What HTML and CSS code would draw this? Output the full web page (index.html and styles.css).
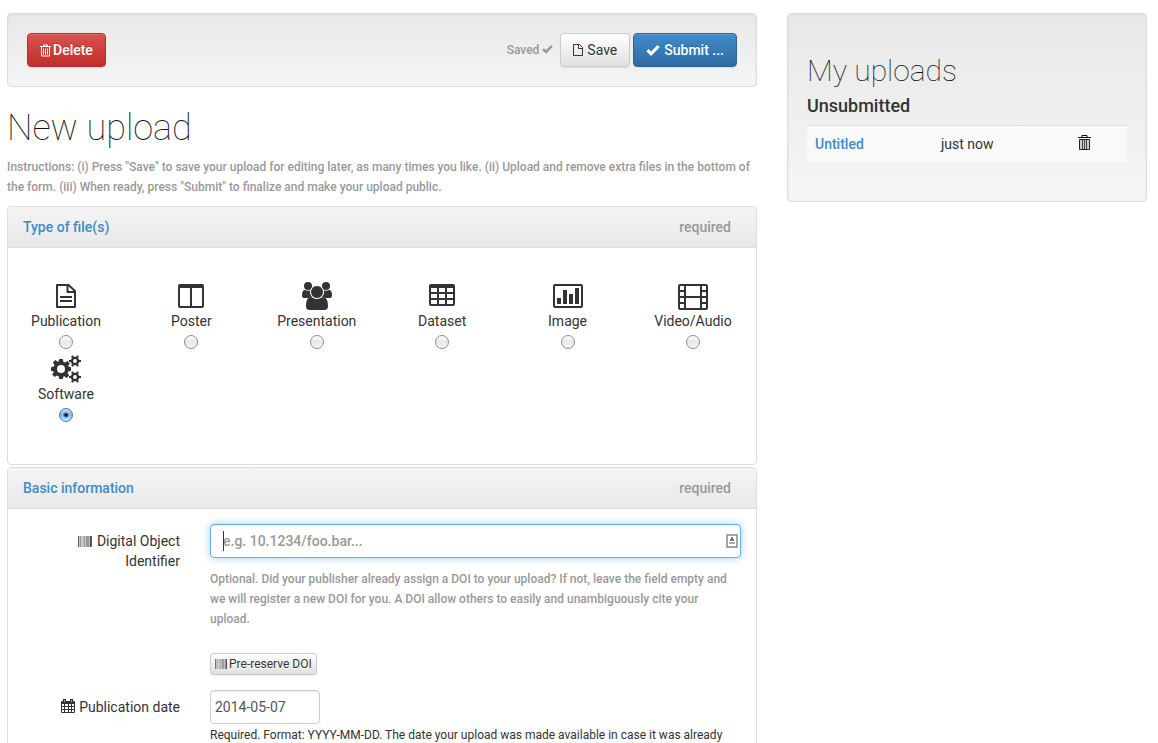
FILE: index.html
```html
<!DOCTYPE html>
<html lang="en">
<head>
<meta charset="utf-8">
<title>New upload</title>
<link rel="stylesheet" href="styles.css">
</head>
<body>
<svg class="defs" aria-hidden="true">
  <defs>
    <symbol id="barcode" viewBox="0 0 14 12" preserveAspectRatio="none">
      <path fill="#555" d="M0 0h1v12H0zM12 0h2v12h-2z"/>
      <path fill="#ccc" d="M1 0h1v12H1zM3 0h2v12H3zM7 0h1v12H7z"/>
      <path fill="#999" d="M2 0h1v12H2zM6 0h1v12H6zM8 0h3v12H8z"/>
      <path fill="#bbb" d="M5 0h1v12H5zM11 0h1v12h-1z"/>
    </symbol>
    <symbol id="check" viewBox="0 0 12 10">
      <path d="M1.2 5.2 4.3 8.2 10.8 1.6" fill="none" stroke="currentColor" stroke-width="2.7"/>
    </symbol>
    <symbol id="gear" viewBox="-10 -10 20 20">
      <path fill="currentColor" fill-rule="evenodd" d="M-1.8-10h3.6l.6 2.7 1.7.7L6.5-8 8.9-5.6 7.2-3.2 7.4-2.5 10-1.8V1.8L7.3 2.4 6.6 4.1 8.1 6.4 5.6 8.9 3.3 7.3 2.4 7.5 1.8 10H-1.8L-2.4 7.3-4.1 6.6-6.4 8.1-8.9 5.6-7.3 3.3-7.5 2.4-10 1.8V-1.8L-7.3-2.4-6.6-4.1-8.1-6.4-5.6-8.9-3.3-7.3-2.4-7.5zM0-4A4 4 0 1 0 0 4 4 4 0 1 0 0-4z"/>
    </symbol>
    <symbol id="cog" viewBox="-6.2 -6.2 12.4 12.4">
      <circle r="3.2" fill="none" stroke="currentColor" stroke-width="2.4"/>
      <path stroke="currentColor" stroke-width="2.2" d="M-4 0h-2.2M4 0h2.2M-2-3.5l-1.1-1.9M2-3.5l1.1-1.9M-2 3.5l-1.1 1.9M2 3.5l1.1 1.9"/>
    </symbol>
  </defs>
</svg>

<div class="page">
  <main>
    <div class="well toolbar">
      <button class="btn btn-danger" type="button">
        <svg width="11" height="13" viewBox="0 0 11 13" aria-hidden="true"><path d="M0 2.5h11M3.5 2.5V1h4v1.5M1.5 2.5V12h8V2.5M3.5 4.5v6M5.5 4.5v6M7.5 4.5v6" fill="none" stroke="currentColor"/></svg>
        Delete
      </button>
      <span class="status">Saved <svg width="11" height="10" aria-hidden="true"><use href="#check"/></svg></span>
      <div class="actions">
        <button class="btn btn-default" type="button">
          <svg width="10" height="12" viewBox="0 0 10 12" aria-hidden="true"><path d="M.5.5h6l3 3v8h-9zM5.5.5v4h4" fill="none" stroke="currentColor"/></svg>
          Save
        </button>
        <button class="btn btn-primary" type="button">
          <svg width="14" height="12" aria-hidden="true"><use href="#check"/></svg>
          Submit ...
        </button>
      </div>
    </div>

    <h1>New upload</h1>
    <p class="intro">Instructions: (i) Press "Save" to save your upload for editing later, as many times you like. (ii) Upload and remove extra files in the bottom of the form. (iii) When ready, press "Submit" to finalize and make your upload public.</p>

    <section class="panel">
      <header class="panel-heading"><a href="#types">Type of file(s)</a><span>required</span></header>
      <div class="types" id="types">
        <label class="type">
          <svg viewBox="0 0 30 28" aria-hidden="true"><path d="M6 3h11.5L24 9v16H6zM16.5 3v7H24" fill="none" stroke="currentColor" stroke-width="2" stroke-linejoin="round"/><path d="M9 15h12M9 19h12" stroke="currentColor" stroke-width="2"/></svg>
          Publication
          <input type="radio" name="type">
        </label>
        <label class="type">
          <svg viewBox="0 0 30 28" aria-hidden="true"><rect x="3" y="3" width="24" height="22" rx="1" fill="none" stroke="currentColor" stroke-width="2"/><path d="M3 2h24v4H3zM14 5h2v20h-2z" fill="currentColor"/></svg>
          Poster
          <input type="radio" name="type">
        </label>
        <label class="type">
          <svg viewBox="0 0 30 28" aria-hidden="true"><g fill="currentColor"><circle cx="6" cy="4" r="4"/><circle cx="24" cy="4" r="4"/><path d="M0 13c0-3 1-5 3-5 2 1 4 1 6 0L8 11l2 4-4 1H2c-1.5 0-2-1-2-3zM30 13c0-3-1-5-3-5-2 1-4 1-6 0l1 3-2 4 4 1h4c1.5 0 2-1 2-3z"/><path d="M4 24c0-6 2-9 5-9 4 2 8 2 12 0 3 0 5 3 5 9 0 3-1.500 4-4 4H8c-2.500 0-4-1-4-4z"/><circle cx="15" cy="10" r="6.500" stroke="#fff"/></g></svg>
          Presentation
          <input type="radio" name="type">
        </label>
        <label class="type">
          <svg viewBox="0 0 30 28" aria-hidden="true"><path fill="currentColor" fill-rule="evenodd" d="M4 2h22a2 2 0 0 1 2 2v18a2 2 0 0 1-2 2H4a2 2 0 0 1-2-2V4a2 2 0 0 1 2-2zM4 6v4h6V6zM12 6v4h6V6zM20 6v4h6V6zM4 12v4h6v-4zM12 12v4h6v-4zM20 12v4h6v-4zM4 18v4h6v-4zM12 18v4h6v-4zM20 18v4h6v-4z"/></svg>
          Dataset
          <input type="radio" name="type">
        </label>
        <label class="type">
          <svg viewBox="0 0 30 28" aria-hidden="true"><rect x="1" y="3" width="28" height="22" rx="1" fill="none" stroke="currentColor" stroke-width="2"/><path d="M4 16h4v6H4zM10 8h4v14h-4zM16 12h4v10h-4zM22 6h4v16h-4z" fill="currentColor"/></svg>
          Image
          <input type="radio" name="type">
        </label>
        <label class="type">
          <svg viewBox="0 0 30 28" aria-hidden="true"><rect y="2" width="30" height="26" rx="2" fill="currentColor"/><path fill="#fff" d="M8 4h14v10H8zM8 16h14v10H8z"/><path stroke="#fff" stroke-width="4" stroke-dasharray="4 2" d="M4 4v22M26 4v22"/></svg>
          Video/Audio
          <input type="radio" name="type">
        </label>
        <label class="type">
          <svg viewBox="0 0 30 28" aria-hidden="true"><use href="#gear" x="0" y="4" width="20" height="20"/><use href="#cog" x="18" y="0" width="12" height="12"/><use href="#cog" x="18" y="16" width="12" height="12"/></svg>
          Software
          <input type="radio" name="type" checked>
        </label>
      </div>
    </section>

    <section class="panel">
      <header class="panel-heading"><a href="#basic">Basic information</a><span>required</span></header>
      <div class="fields" id="basic">
        <label class="field-label" for="doi"><svg width="14" height="11" aria-hidden="true"><use href="#barcode"/></svg> Digital Object Identifier</label>
        <div class="field">
          <div class="doi-box">
            <input class="control focused" id="doi" type="text" placeholder="e.g. 10.1234/foo.bar...">
            <i class="caret"></i>
            <svg class="autofill" width="12" height="14" viewBox="0 0 12 14" aria-hidden="true"><rect x="1" y="1" width="10" height="12" fill="#fff" stroke="#888" stroke-width="1.5"/><path d="M5 3h2v2h1v2H4V5h1z" fill="#777"/><path d="M3 8h6v2H3z" fill="#aaa"/></svg>
          </div>
          <p class="help">Optional. Did your publisher already assign a DOI to your upload? If not, leave the field empty and we will register a new DOI for you. A DOI allow others to easily and unambiguously cite your upload.</p>
          <button class="btn btn-default btn-small" type="button"><svg width="12" height="10" aria-hidden="true"><use href="#barcode"/></svg> Pre-reserve DOI</button>
        </div>
        <label class="field-label" for="date"><svg width="14" height="14" viewBox="0 0 14 14" aria-hidden="true"><path fill="#333" d="M1 2h12a1 1 0 0 1 1 1v10a1 1 0 0 1-1 1H1a1 1 0 0 1-1-1V3a1 1 0 0 1 1-1zM2 0h3v4H2zM9 0h3v4H9z"/><path fill="#fff" d="M1 5h2v2H1zM4 5h3v2H4zM8 5h2v2H8zM11 5h2v2h-2zM1 8h2v2H1zM4 8h3v2H4zM8 8h2v2H8zM11 8h2v2h-2zM1 11h2v2H1zM4 11h3v2H4zM8 11h2v2H8zM11 11h2v2h-2z"/><path d="M3.5 1v2M10.5 1v2" stroke="#aaa"/></svg> Publication date</label>
        <div class="field">
          <input class="control date" id="date" type="text" value="2014-05-07">
          <p class="note">Required. Format: YYYY-MM-DD. The date your upload was made available in case it was already</p>
        </div>
      </div>
    </section>
  </main>

  <aside class="well uploads">
    <h2>My uploads</h2>
    <h4>Unsubmitted</h4>
    <table>
      <tr>
        <td class="name"><a href="#untitled">Untitled</a></td>
        <td class="time">just now</td>
        <td><button class="trash" type="button" aria-label="Delete upload"><svg width="13" height="16" viewBox="0 0 13 16" aria-hidden="true"><path d="M0 2.5h13M4 2.5v-2h5v2" fill="none" stroke="#111"/><path d="M1.5 4.5h10v10h-10z" fill="#ccc" stroke="#222"/><path d="M4.5 5v9M6.5 5v9M8.5 5v9" stroke="#444"/></svg></button></td>
      </tr>
    </table>
  </aside>
</div>
</body>
</html>
```
FILE: styles.css
```css
* { box-sizing: border-box; }

body {
  margin: 0;
  background: #fff;
  color: #333;
  font: 14px/20px Roboto, "Liberation Sans", sans-serif;
}

a { color: #428bca; text-decoration: none; }
svg { overflow: visible; }
.defs { position: absolute; width: 0; height: 0; }

.page {
  display: grid;
  grid-template-columns: 25fr 12fr;
  gap: 30px;
  align-items: start;
  padding: 13px 11px 0 7px;
}

.well {
  padding: 19px;
  border: 1px solid #dcdcdc;
  border-radius: 4px;
  background: linear-gradient(#e8e8e8, #f5f5f5);
  box-shadow: inset 0 1px 3px rgba(0, 0, 0, 0.05);
}

.toolbar { display: flex; align-items: center; margin-bottom: 20px; }
.status { margin-left: auto; margin-right: 7px; color: #999; font-size: 12px; font-weight: 500; }
.actions { display: flex; gap: 3px; }

.btn {
  display: inline-flex;
  align-items: center;
  justify-content: center;
  gap: 3px;
  padding: 6px 12px;
  border: 1px solid #ccc;
  border-radius: 4px;
  font: 14px/20px Roboto, "Liberation Sans", sans-serif;
  box-shadow: inset 0 1px 0 rgba(255, 255, 255, 0.15), 0 1px 1px rgba(0, 0, 0, 0.08);
}
.btn-default { color: #333; background: linear-gradient(#fff, #e0e0e0); text-shadow: 0 1px 0 #fff; }
.btn-danger,
.btn-primary { color: #fff; font-weight: 500; text-shadow: 0 -1px 0 rgba(0, 0, 0, 0.2); }
.btn-danger { gap: 2px; border-color: #b92c28; background: linear-gradient(#d9534f, #c12e2a); }
.btn-primary { border-color: #2b669a; background: linear-gradient(#428bca, #2d6ca2); }
.actions .btn { gap: 4px; }
.btn-small { gap: 2px; padding: 1px 4px; border-radius: 3px; font-size: 12px; line-height: 18px; }

h1, h2, h4 { margin: 0; font-weight: 100; }
h1, h2 { color: #111; }
h1 { margin-bottom: 8px; font-size: 36px; line-height: 42px; }
h2 { margin: 20px 0 8px; font-size: 30px; line-height: 35px; }
h4 { margin-bottom: 10px; font-size: 18px; font-weight: 500; line-height: 19px; }

.intro { margin: 0 0 9px; color: #999; font-size: 12px; font-weight: 500; }

.panel { margin-bottom: 2px; border: 1px solid #ddd; border-radius: 4px; }
.panel-heading {
  display: flex;
  justify-content: space-between;
  padding: 10px 25px 10px 15px;
  border-bottom: 1px solid #ddd;
  border-radius: 3px 3px 0 0;
  background: linear-gradient(#f5f5f5, #e8e8e8);
  color: #999;
  font-weight: 500;
}

.types {
  display: grid;
  grid-template-columns: repeat(6, 86px);
  justify-content: space-between;
  row-gap: 6px;
  padding: 34px 20px 42px 15px;
}
.type { display: flex; flex-direction: column; align-items: center; }
.type svg { width: 30px; height: 28px; margin-bottom: 1px; }
.type input {
  appearance: none;
  width: 14px;
  height: 14px;
  margin: 4px 0 0;
  border: 1px solid #8c8c8c;
  border-radius: 50%;
  background: linear-gradient(#fff, #e8e8e8 50%, #f8f8f8);
}
.type input:checked {
  border-color: #5a6ea8;
  background: radial-gradient(circle, #0b1a33 0 1px, transparent 3px), linear-gradient(#c4ddf8, #7db8f0 50%, #b8f0ff);
}

.fields {
  display: grid;
  grid-template-columns: 3fr 9fr;
  row-gap: 15px;
  padding: 15px 0 20px;
}
.field-label { padding: 7px 15px 0; text-align: right; }
.field-label svg { margin-right: 1px; vertical-align: -1px; }
.field { padding: 0 15px; }

.control {
  display: block;
  width: 100%;
  height: 34px;
  padding: 6px 12px;
  border: 1px solid #ccc;
  border-radius: 4px;
  background: #fff;
  color: #555;
  font: 14px/20px Roboto, "Liberation Sans", sans-serif;
  box-shadow: inset 0 1px 1px rgba(0, 0, 0, 0.075);
}
.control::placeholder { color: #999; font-weight: 500; opacity: 1; }
.focused { border-color: #66afe9; box-shadow: inset 0 1px 1px rgba(0, 0, 0, 0.075), 0 0 8px rgba(102, 175, 233, 0.6); }
.date { width: 110px; padding: 6px 4px; }

.doi-box { position: relative; }
.caret { position: absolute; top: 7px; left: 13px; width: 1px; height: 20px; background: #333; }
.autofill { position: absolute; top: 10px; right: 3px; }

.help { margin: 11px 0 24px; color: #999; font-size: 12px; font-weight: 500; }
.note { margin: 1px 0 0; font-size: 12px; }

table { width: 100%; border-collapse: collapse; margin-bottom: 20px; background: #f9f9f9; }
td { padding: 8px; border-top: 1px solid #ddd; }
td a { font-weight: 500; }
.name { width: 126px; }
.time { width: 137px; }
.trash { display: block; margin-bottom: 2px; padding: 0; border: 0; background: none; line-height: 0; }
```
